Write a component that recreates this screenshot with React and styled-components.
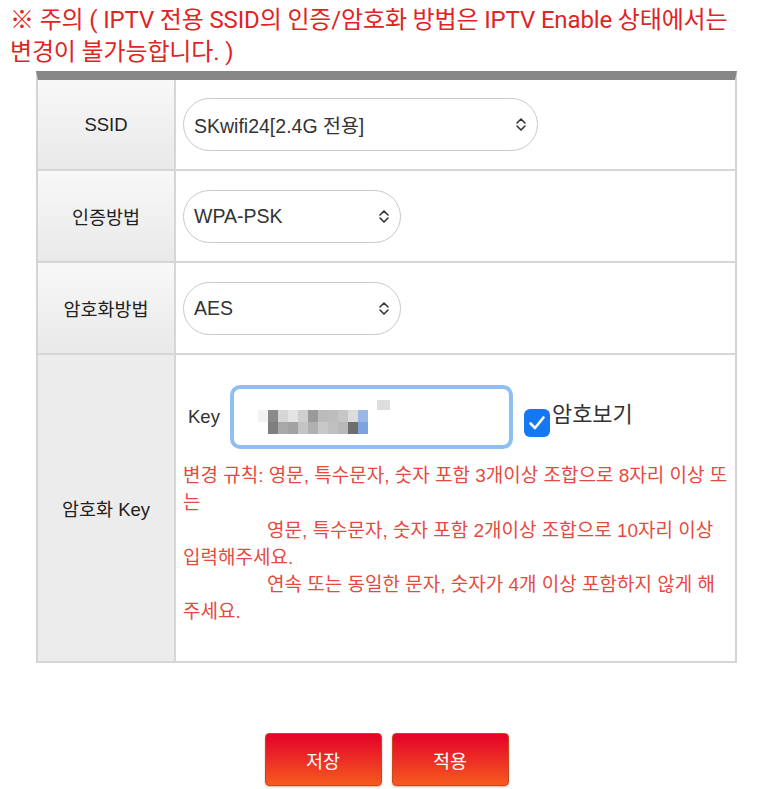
import React from 'react'
import styled, { createGlobalStyle } from 'styled-components'

const GlobalStyle = createGlobalStyle`
  html, body {
    margin: 0;
    padding: 0;
    background: #ffffff;
    font-family: "Liberation Sans", "Noto Sans CJK KR", sans-serif;
  }
`

const Page = styled.div`
  width: 773px;
  min-height: 789px;
  padding-top: 4px;
  box-sizing: border-box;
`

const Notice = styled.p`
  margin: 0 0 3px 10px;
  color: #e0241f;
  font-size: 24px;
  line-height: 32px;
  font-family: Roboto, "Noto Sans CJK KR", sans-serif;
  letter-spacing: -0.15px;
  white-space: nowrap;
`

const Table = styled.div`
  margin-left: 36px;
  width: 701px;
  border-top: 9px solid #878787;
  border-left: 2px solid #d4d4d4;
  border-right: 2px solid #d4d4d4;
  box-sizing: border-box;
`

const Row = styled.div`
  display: grid;
  grid-template-columns: 138px 1fr;
  box-sizing: border-box;
  height: ${({ h }) => h}px;
  border-bottom: 2px solid #d6d6d6;
`

const Label = styled.div`
  display: flex;
  align-items: center;
  justify-content: center;
  border-right: 2px solid #d6d6d6;
  background: ${({ flat }) => (flat ? '#ececec' : 'linear-gradient(#f8f8f8, #e9e9e9)')};
  color: #222;
  font-size: 18.5px;
`

const Value = styled.div`
  display: flex;
  align-items: center;
  padding-left: 7px;
  background: #fff;
`

const Select = styled.div`
  display: flex;
  align-items: center;
  justify-content: space-between;
  box-sizing: border-box;
  width: ${({ w }) => w}px;
  height: 53px;
  padding: 0 10px 0 10px;
  border: 1.5px solid #c9c9c9;
  border-radius: 27px;
  color: #333;
  font-size: 19.5px;
`

const KeyCell = styled.div`
  padding: 30px 8px 0 7px;
  background: #fff;
`

const KeyLine = styled.div`
  display: flex;
  align-items: center;
`

const KeyLabel = styled.span`
  color: #333;
  font-size: 18.5px;
  margin: 0 10px 0 5px;
`

const KeyInput = styled.div`
  box-sizing: border-box;
  width: 283px;
  height: 64px;
  border: 4px solid #8fbff2;
  border-radius: 10px;
  padding: 3px 0 0 24px;
  display: flex;
  align-items: center;
`

const ShowBox = styled.label`
  display: flex;
  align-items: center;
  margin-left: 11px;
  color: #333;
  font-size: 22px;
  margin-top: -10px;
`

const Check = styled.span`
  display: inline-flex;
  align-items: center;
  justify-content: center;
  width: 26px;
  height: 28px;
  border-radius: 6px;
  background: #1677f2;
  margin-top: 22px;
  margin-right: 2px;
`

const Rules = styled.div`
  margin-top: 13px;
  color: #e64a3f;
  font-size: 19px;
  line-height: 27.3px;
  white-space: nowrap;
`

const Indent = styled.span`
  padding-left: 84px;
`

const Buttons = styled.div`
  display: flex;
  justify-content: center;
  gap: 10px;
  margin-top: 70px;
`

const Button = styled.button`
  width: 117px;
  height: 53px;
  border: 1px solid #c8481e;
  border-radius: 4px;
  background: linear-gradient(#e4002a, #f65a1f);
  color: #fff;
  font-size: 18.5px;
  font-family: "Liberation Sans", "Noto Sans CJK KR", sans-serif;
  box-shadow: 0 1px 2px rgba(120, 40, 0, 0.35);
`

const Arrows = () => (
  <svg width="12" height="15" viewBox="0 0 12 15" fill="none" stroke="#333" strokeWidth="1.6" strokeLinecap="round" strokeLinejoin="round">
    <path d="M2 6 L6 2 L10 6" />
    <path d="M2 9 L6 13 L10 9" />
  </svg>
)

const mosaic = [
  ['#f2f2f2', '#8a8a8a', '#d6d6d6', '#e4e4e4', '#cfcfcf', '#9a9a9a', '#bbbbbb', '#bdbdbd', '#c6c6c6', '#dcdcdc', '#9ab8e4', '#ffffff'],
  ['#ffffff', '#7e7e7e', '#a8a8a8', '#a2a2a2', '#c4c4c4', '#b0b0b0', '#c8c8c8', '#c0c0c0', '#b8b8b8', '#6e6e6e', '#7ea3dc', '#ffffff'],
]

const Masked = () => (
  <svg width="132" height="38" viewBox="0 0 132 38">
    <rect x="119" y="0" width="13" height="10" fill="#dedede" />
    {mosaic.map((row, r) =>
      row.map((c, i) => <rect key={`${r}-${i}`} x={i * 10} y={10 + r * 12} width="10" height="12" fill={c} />)
    )}
  </svg>
)

export default function App() {
  return (
    <Page>
      <GlobalStyle />
      <Notice>
        ※ 주의 ( IPTV 전용 SSID의 인증/암호화 방법은 IPTV Enable 상태에서는
        <br />
        변경이 불가능합니다. )
      </Notice>
      <Table>
        <Row h={91}>
          <Label>SSID</Label>
          <Value>
            <Select w={355}>
              SKwifi24[2.4G 전용]
              <Arrows />
            </Select>
          </Value>
        </Row>
        <Row h={92}>
          <Label>인증방법</Label>
          <Value>
            <Select w={218}>
              WPA-PSK
              <Arrows />
            </Select>
          </Value>
        </Row>
        <Row h={92}>
          <Label>암호화방법</Label>
          <Value>
            <Select w={218}>
              AES
              <Arrows />
            </Select>
          </Value>
        </Row>
        <Row h={308}>
          <Label flat>암호화 Key</Label>
          <KeyCell>
            <KeyLine>
              <KeyLabel>Key</KeyLabel>
              <KeyInput>
                <Masked />
              </KeyInput>
              <ShowBox>
                <Check>
                  <svg width="18" height="16" viewBox="0 0 18 16" fill="none" stroke="#fff" strokeWidth="2.6" strokeLinecap="round" strokeLinejoin="round">
                    <path d="M2.5 8.5 L7 13 L15.5 2.5" />
                  </svg>
                </Check>
                암호보기
              </ShowBox>
            </KeyLine>
            <Rules>
              변경 규칙: 영문, 특수문자, 숫자 포함 3개이상 조합으로 8자리 이상 또
              <br />는
              <br />
              <Indent>영문, 특수문자, 숫자 포함 2개이상 조합으로 10자리 이상</Indent>
              <br />
              입력해주세요.
              <br />
              <Indent>연속 또는 동일한 문자, 숫자가 4개 이상 포함하지 않게 해</Indent>
              <br />
              주세요.
            </Rules>
          </KeyCell>
        </Row>
      </Table>
      <Buttons>
        <Button>저장</Button>
        <Button>적용</Button>
      </Buttons>
    </Page>
  )
}
